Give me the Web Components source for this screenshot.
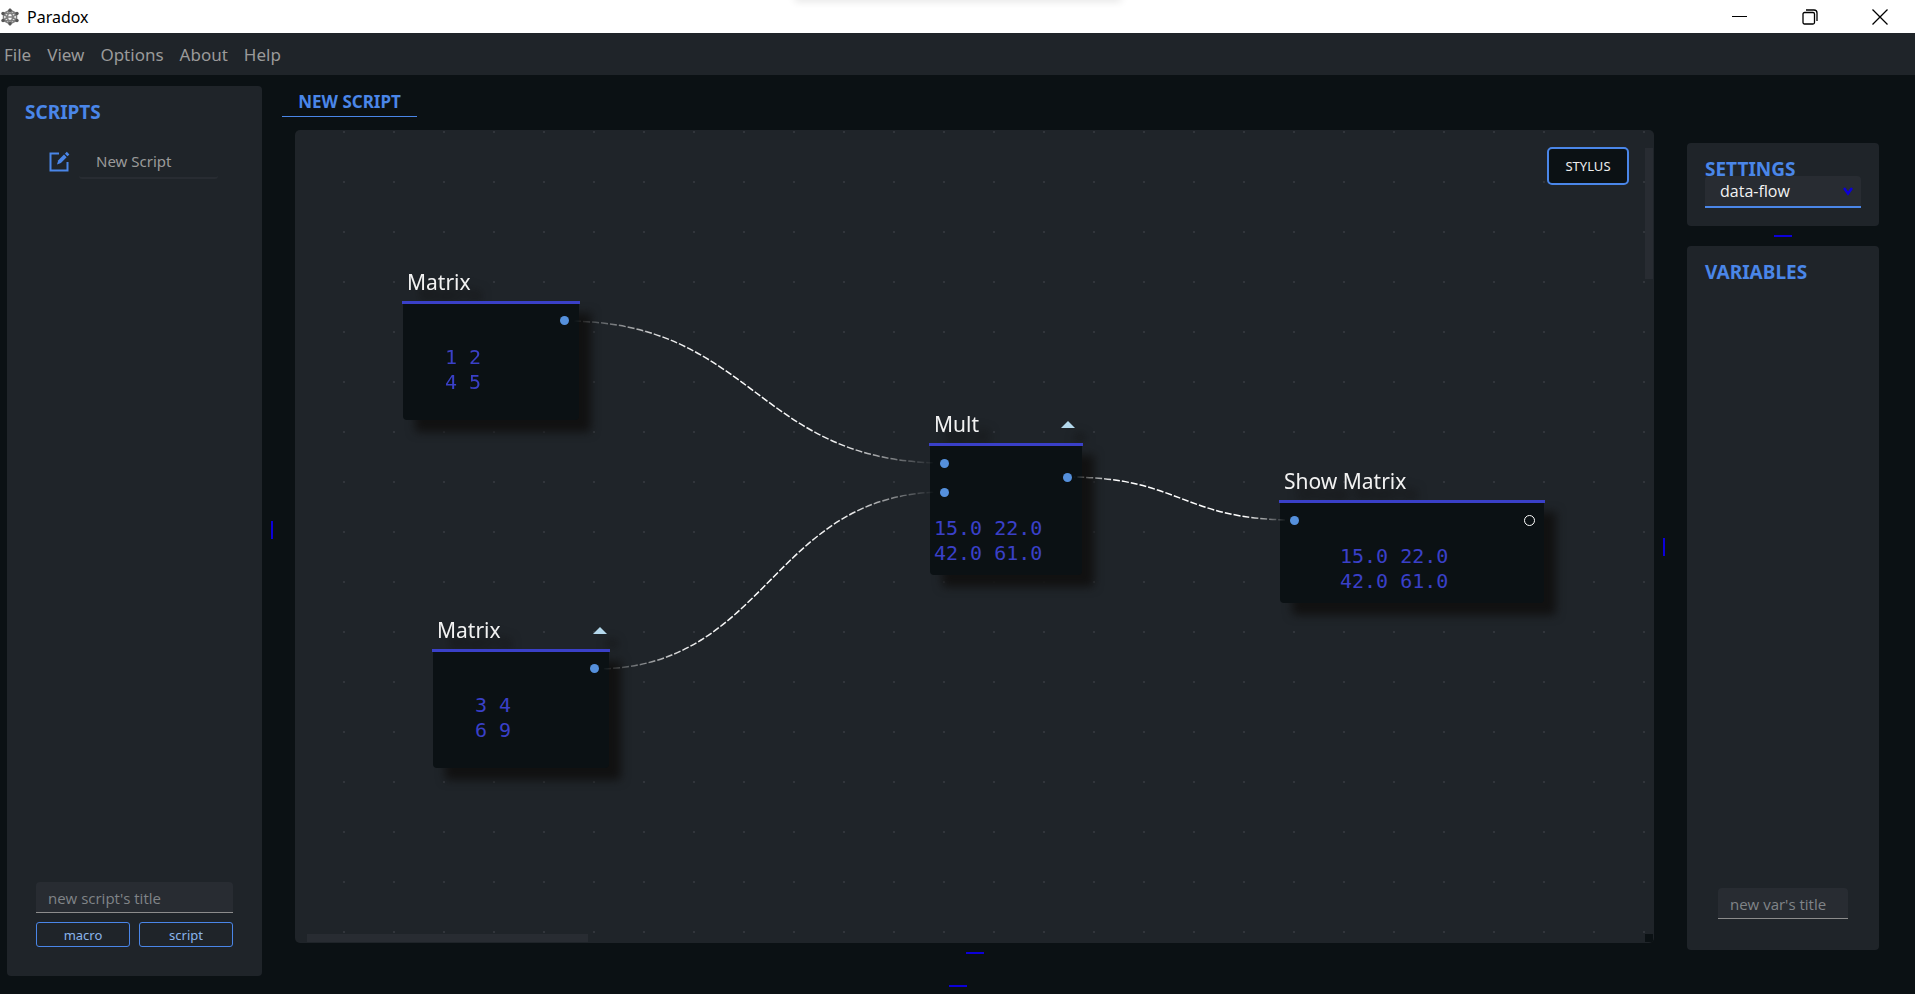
<!DOCTYPE html>
<html lang="en">
<head>
<meta charset="utf-8">
<title>Paradox</title>
<style>
  html, body { margin: 0; }
  body {
    --bg: #0b1114; --panel: #1f2429; --field: #282c32; --accent: #4a86e8;
    --blue: #0c00d8; --rule: #3a40c8; --muted: #9a9a9a;
    background: var(--bg);
    font-family: "Noto Sans", "Open Sans", sans-serif;
    color: #f2f2f2;
  }
</style>
</head>
<body>
<paradox-app></paradox-app>
<script>
const define = (name, html, setup) => {
  const template = document.createElement('template');
  template.innerHTML = html;
  customElements.define(name, class extends HTMLElement {
    constructor() {
      super();
      this.attachShadow({ mode: 'open' }).append(template.content.cloneNode(true));
    }
    connectedCallback() { if (setup) setup(this, this.shadowRoot); }
  });
};

define('title-bar', `
  <style>
    :host { display: flex; align-items: center; justify-content: space-between; height: 33px; background: #fff; color: #000; font-size: 16px; position: relative; overflow: hidden; }
    .brand { display: flex; align-items: center; gap: 8px; padding-left: 1px; }
    .controls { display: flex; }
    button { width: 70px; height: 33px; padding: 0; border: 0; background: none; display: grid; place-items: center; }
    .flyout { position: absolute; top: -6px; left: 50%; width: 326px; height: 4px; margin-left: -163px; box-shadow: 0 2px 8px #0003; }
  </style>
  <div class="brand">
    <svg width="18" height="18" viewBox="0 0 18 18" fill="none" stroke="#555" stroke-width="1.5">
      <path d="M9 2 15.500 5.500V12.500L9 16 2.500 12.500V5.500Z M9 2 12 9 9 16 6 9Z M2.500 5.500 6 9 2.500 12.500M15.500 5.500 12 9 15.500 12.500M6 9H12M2.500 5.500H15.500M2.500 12.500H15.500" opacity=".75"/>
      <g fill="#555" stroke="none"><circle cx="9" cy="2.200" r="1.700"/><circle cx="9" cy="15.800" r="1.700"/><circle cx="2" cy="5.500" r="1.700"/><circle cx="16" cy="5.500" r="1.700"/><circle cx="2" cy="12.500" r="1.700"/><circle cx="16" cy="12.500" r="1.700"/></g>
    </svg>
    <span>Paradox</span>
  </div>
  <div class="flyout"></div>
  <div class="controls">
    <button aria-label="Minimize"><svg width="16" height="16" stroke="#000"><path d="M0 7.500H15"/></svg></button>
    <button aria-label="Restore"><svg width="16" height="16" fill="none" stroke="#000" stroke-width="1.300"><rect x="1" y="3.500" width="11.500" height="11.500" rx="1.500"/><path d="M4 1H12A3 3 0 0 1 15 4V12"/></svg></button>
    <button aria-label="Close"><svg width="16" height="16" stroke="#000" stroke-width="1.300"><path d="M.5.5 15.500 15.500M15.500.5.5 15.500"/></svg></button>
  </div>`);

define('menu-bar', `
  <style>
    :host { display: block; background: var(--panel); }
    nav { display: flex; gap: 16px; height: 42px; align-items: center; padding-left: 4px; }
    a { color: var(--muted); text-decoration: none; font: 17px "Noto Sans", sans-serif; }
  </style>
  <nav><a href="#file">File</a><a href="#view">View</a><a href="#options">Options</a><a href="#about">About</a><a href="#help">Help</a></nav>`);

define('split-handle', `
  <style>
    :host { display: flex; align-items: center; justify-content: center; }
    i { width: 18px; height: 2px; background: var(--blue); }
    :host([vertical]) { width: 20px; margin-right: 13px; flex: none; }
    :host([vertical]) i { width: 2px; height: 18px; }
  </style><i></i>`);

define('side-panel', `
  <style>
    :host { display: flex; flex-direction: column; box-sizing: border-box; background: var(--panel); border-radius: 4px; padding: 14px 18px; }
    h2 { margin: 0; color: var(--accent); font: bold 19px/24px "Noto Sans", sans-serif; }
  </style>
  <h2></h2><slot></slot>`,
  (el, root) => { root.querySelector('h2').textContent = el.getAttribute('heading'); });

define('title-field', `
  <style>
    :host { display: block; }
    input { display: block; box-sizing: border-box; width: 100%; height: 31px; padding: 2px 12px 0; border: 0; border-bottom: 1px solid #8c8c8c; border-radius: 4px 4px 0 0; background: var(--field); color: #ddd; font: 15px "Open Sans", sans-serif; }
    input::placeholder { color: #808488; opacity: 1; }
  </style>
  <input type="text">`,
  (el, root) => {
    const input = root.querySelector('input');
    input.placeholder = el.getAttribute('hint');
    input.setAttribute('aria-label', el.getAttribute('hint'));
  });

define('action-button', `
  <style>
    :host { display: block; }
    button { display: block; box-sizing: border-box; width: 100%; height: 25px; padding: 0; border: 1px solid var(--accent); border-radius: 3px; background: none; color: #8ab4ec; font: 13px "Noto Sans", sans-serif; }
    :host([large]) button { height: 38px; border-width: 2px; border-radius: 5px; background: var(--bg); color: #eee; }
  </style>
  <button><slot></slot></button>`);

define('script-item', `
  <style>
    :host { display: flex; align-items: flex-start; gap: 9px; padding: 0 26px 0 24px; }
    svg { margin-top: 5px; flex: none; }
    span { flex: 1; height: 31px; line-height: 31px; padding-left: 17px; border-bottom: 2px solid var(--field); border-radius: 3px; color: var(--muted); font-size: 15px; }
  </style>
  <svg width="21" height="21" viewBox="0 0 21 21" fill="none" stroke="var(--accent)" stroke-width="2"><path d="M10 2.500H1.500V19.500H18.500V11"/><path d="M8 13.500 9.300 9.300 15 3.600 17.600 6.200 11.900 11.900Z" fill="var(--accent)" stroke="none"/><path d="M15.900 2.700 17.800.8 20.400 3.400 18.500 5.300Z" fill="var(--accent)" stroke="none"/></svg>
  <span><slot></slot></span>`);

define('mode-picker', `
  <style>
    :host { display: block; position: relative; margin-top: -5px; }
    select { appearance: none; display: block; width: 100%; height: 32px; box-sizing: border-box; padding: 0 15px; border: 0; border-bottom: 2px solid var(--accent); border-radius: 4px 4px 0 0; background: var(--field); color: #f2f2f2; font: 16px "Open Sans", sans-serif; }
    svg { position: absolute; right: 8px; top: 11px; pointer-events: none; }
  </style>
  <select aria-label="Settings mode"><option>data-flow</option></select>
  <svg width="10" height="9" fill="none" stroke="var(--blue)" stroke-width="2.500"><path d="M1 1 5 6.500 9 1"/></svg>`);

/* A node of the diagram: title, top rule, body with its ports and printed matrix. */
define('flow-node', `
  <style>
    :host { position: absolute; filter: drop-shadow(12px 12px 5px #111); }
    header { display: flex; justify-content: space-between; align-items: center; height: 30px; padding: 0 var(--mark-right) 4px 5px; font-size: 21px; }
    header svg { display: none; }
    :host([marked]) header svg { display: block; }
    .body { border-top: 3px solid var(--rule); position: relative; }
    .fill { box-sizing: border-box; margin: 0 1px; background: var(--bg); border-radius: 0 0 4px 4px; height: 100%; padding: var(--text-top) 0 0 var(--text-left); }
    pre { margin: 0; color: var(--rule); font: 20px/25px "DejaVu Sans Mono", monospace; }
    .port { position: absolute; width: 9px; height: 9px; border-radius: 50%; background: #5590dc; }
    .port.open { box-sizing: border-box; width: 11px; height: 11px; margin: -1px; background: none; border: 1px solid #fff; }
  </style>
  <header><span></span><svg width="14" height="7"><path d="M7 0 14 7H0Z" fill="#b4d8ec"/></svg></header>
  <div class="body"><div class="fill"><pre></pre></div></div>`,
  (el, root) => {
    const d = el.dataset, body = root.querySelector('.body');
    el.style.cssText = `left:${d.x}px;top:${d.y}px;width:${d.w}px;--text-left:${d.textLeft}px;--text-top:${d.textTop}px;--mark-right:${d.mark || 0}px`;
    body.style.height = d.h + 'px';
    root.querySelector('span').textContent = d.title;
    root.querySelector('pre').textContent = d.rows.split('|').join('\n');
    for (const spec of d.ports.split(';')) {
      const [side, top, kind] = spec.split(',');
      const port = document.createElement('div');
      port.className = 'port ' + (kind || '');
      port.style[side === 'in' ? 'left' : 'right'] = '11px';
      port.style.top = top + 'px';
      body.append(port);
    }
  });

define('flow-canvas', `
  <style>
    :host { display: block; position: relative; overflow: hidden; border-radius: 5px; background: var(--panel); flex: 1; }
    .dots { position: absolute; inset: 0 0 0 48px; }
    .dots svg, .wires { position: absolute; left: 0; top: 0; width: 100%; height: 100%; pointer-events: none; }
    .wires path { fill: none; stroke-width: 1.5; stroke-dasharray: 7 2; }
    .stylus { position: absolute; right: 25px; top: 17px; width: 82px; }
    .vbar, .hbar, .corner { position: absolute; background: var(--field); }
    .vbar { right: 1px; top: 18px; width: 8px; height: 131px; }
    .hbar { left: 12px; bottom: 1px; width: 281px; height: 8px; }
    .corner { right: 1px; bottom: 1px; width: 8px; height: 8px; background: var(--bg); }
  </style>
  <div class="dots"><svg><defs><pattern id="grid" width="50" height="50" patternUnits="userSpaceOnUse"><rect y="1" width="2" height="2" fill="#31353b"/></pattern></defs><rect width="100%" height="100%" fill="url(#grid)"/></svg></div>
  <slot></slot>
  <svg class="wires">
    <defs>
      <linearGradient id="w1" gradientUnits="userSpaceOnUse" x1="278" y1="0" x2="640" y2="0"><stop offset="0" stop-color="#fff" stop-opacity="0"/><stop offset=".25" stop-color="#fff" stop-opacity=".9"/><stop offset=".5" stop-color="#fff"/><stop offset=".75" stop-color="#fff" stop-opacity=".9"/><stop offset="1" stop-color="#fff" stop-opacity="0"/></linearGradient>
      <linearGradient id="w2" gradientUnits="userSpaceOnUse" x1="306" y1="0" x2="640" y2="0"><stop offset="0" stop-color="#fff" stop-opacity="0"/><stop offset=".25" stop-color="#fff" stop-opacity=".9"/><stop offset=".5" stop-color="#fff"/><stop offset=".75" stop-color="#fff" stop-opacity=".9"/><stop offset="1" stop-color="#fff" stop-opacity="0"/></linearGradient>
      <linearGradient id="w3" gradientUnits="userSpaceOnUse" x1="778" y1="0" x2="992" y2="0"><stop offset="0" stop-color="#fff" stop-opacity="0"/><stop offset=".2" stop-color="#fff"/><stop offset=".8" stop-color="#fff"/><stop offset="1" stop-color="#fff" stop-opacity="0"/></linearGradient>
    </defs>
    <path stroke="url(#w1)" d="M270 191C460 191 460 333 650 333"/>
    <path stroke="url(#w2)" d="M300 539C475 539 475 362 650 362"/>
    <path stroke="url(#w3)" d="M773 347C886 347 886 390 1000 390"/>
  </svg>
  <div class="vbar"></div><div class="hbar"></div><div class="corner"></div>
  <action-button class="stylus" large>STYLUS</action-button>`);

define('paradox-app', `
  <style>
    :host { display: flex; flex-direction: column; min-height: 100vh; }
    main { flex: 1; display: flex; padding-left: 7px; }
    .scripts { width: 255px; margin: 11px 0 9px; flex: none; }
    .scripts script-item { margin-top: 22px; }
    .add { margin-top: auto; display: grid; grid-template-columns: 1fr 1fr; gap: 9px; padding: 0 11px 15px; }
    .add title-field { grid-column: 1 / 3; }
    .center { flex: 1; min-width: 0; display: flex; flex-direction: column; }
    .tabs { height: 55px; flex: none; }
    .tabs a { display: block; box-sizing: border-box; width: 135px; height: 42px; margin-left: -13px; padding-top: 15px; text-align: center; border-bottom: 1px solid var(--accent); color: var(--accent); text-decoration: none; font: bold 17px/24px "Noto Sans", sans-serif; }
    .below { height: 42px; flex: none; }
    .below split-handle { height: 20px; }
    .right { width: 192px; margin-right: 36px; flex: none; display: flex; flex-direction: column; }
    .right, .right-split { padding-top: 68px; padding-bottom: 35px; }
    .settings { height: 83px; }
    .right split-handle { height: 20px; }
    .variables { flex: 1; }
    .variables title-field { margin: auto 13px 17px; }
    .bottom { height: 2px; margin-bottom: 7px; }
  </style>
  <title-bar></title-bar>
  <menu-bar></menu-bar>
  <main>
    <side-panel class="scripts" heading="SCRIPTS">
      <script-item>New Script</script-item>
      <div class="add">
        <title-field hint="new script's title"></title-field>
        <action-button>macro</action-button><action-button>script</action-button>
      </div>
    </side-panel>
    <split-handle vertical></split-handle>
    <div class="center">
      <div class="tabs"><a href="#new-script">NEW SCRIPT</a></div>
      <flow-canvas>
        <flow-node data-title="Matrix" data-x="107" data-y="137" data-w="178" data-h="116" data-text-left="42" data-text-top="41" data-rows="1 2|4 5" data-ports="out,12"></flow-node>
        <flow-node marked data-mark="3" data-title="Matrix" data-x="137" data-y="485" data-w="178" data-h="116" data-text-left="42" data-text-top="41" data-rows="3 4|6 9" data-ports="out,12"></flow-node>
        <flow-node marked data-mark="8" data-title="Mult" data-x="634" data-y="279" data-w="154" data-h="129" data-text-left="4" data-text-top="70" data-rows="15.0 22.0|42.0 61.0" data-ports="in,13;in,42;out,27"></flow-node>
        <flow-node data-title="Show Matrix" data-x="984" data-y="336" data-w="266" data-h="100" data-text-left="60" data-text-top="41" data-rows="15.0 22.0|42.0 61.0" data-ports="in,13;out,13,open"></flow-node>
      </flow-canvas>
      <div class="below"><split-handle></split-handle></div>
    </div>
    <split-handle vertical class="right-split"></split-handle>
    <div class="right">
      <side-panel class="settings" heading="SETTINGS"><mode-picker></mode-picker></side-panel>
      <split-handle></split-handle>
      <side-panel class="variables" heading="VARIABLES"><title-field hint="new var's title"></title-field></side-panel>
    </div>
  </main>
  <split-handle class="bottom"></split-handle>`);
</script>
</body>
</html>
